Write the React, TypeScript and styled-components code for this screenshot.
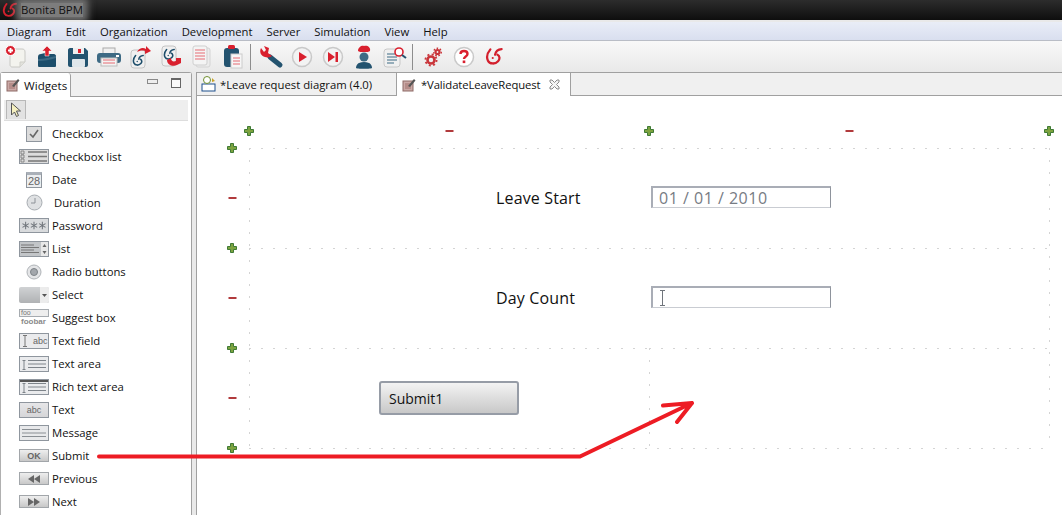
import { ReactNode } from "react";
import styled, { createGlobalStyle } from "styled-components";

const Global = createGlobalStyle`
  html, body { margin: 0; padding: 0; background: #fff; }
  body { font-family: "Open Sans", "Noto Sans", sans-serif; color: #111; overflow: hidden; }
`;

const Page = styled.div`
  width: 1062px;
  height: 515px;
  display: flex;
  flex-direction: column;
  overflow: hidden;
  position: relative;
`;

const TitleBar = styled.div`
  height: 20px;
  flex: none;
  display: flex;
  align-items: center;
  padding-left: 2px;
  background: linear-gradient(#2c2c2c, #0e0e0e);
  font-size: 11.4px;
  overflow: hidden;
`;

const TitleText = styled.span`
  color: #111;
  height: 14px;
  line-height: 14px;
  margin-left: 3px;
  background: rgba(135, 135, 135, 0.9);
  box-shadow: 0 0 7px 5px rgba(135, 135, 135, 0.8);
`;

const MenuBar = styled.div`
  height: 21px;
  flex: none;
  display: flex;
  align-items: center;
  gap: 14px;
  padding-left: 7px;
  border-top: 2px solid #e9e9e9;
  box-sizing: border-box;
  background: linear-gradient(#e9edf7, #d9dfef);
  border-bottom: 1px solid #b9bdc6;
  font-size: 11.3px;
`;

const ToolBar = styled.div`
  height: 31px;
  flex: none;
  display: flex;
  align-items: center;
  background: linear-gradient(#f8f8f8, #e9e9e9);
`;

const ToolButton = styled.div`
  width: 31px;
  height: 26px;
  display: flex;
  align-items: center;
  justify-content: center;
  flex: none;
`;

const ToolSep = styled.div`
  width: 1px;
  height: 26px;
  margin: 0 4px 0 2px;
  background: #8d8d8d;
  flex: none;
`;

const Workspace = styled.div`
  flex: 1;
  display: flex;
  gap: 4px;
  background: #e9e9e9;
  min-height: 0;
`;

const SidePanel = styled.div`
  width: 192px;
  flex: none;
  display: flex;
  flex-direction: column;
  box-sizing: border-box;
  border: 1px solid #a0a0a0;
  border-left-color: #b0b0b0;
  border-bottom: 0;
  border-radius: 3px 3px 0 0;
  background: #fff;
`;

const SideHead = styled.div`
  height: 23px;
  flex: none;
  display: flex;
  background: #f0f0f0;
  border-bottom: 1px solid #a0a0a0;
`;

const SideTab = styled.div`
  width: 70px;
  height: 24px;
  box-sizing: border-box;
  display: flex;
  align-items: center;
  gap: 4px;
  padding-left: 5px;
  font-size: 11.6px;
  background: #fff;
  border-right: 1px solid #a0a0a0;
  border-radius: 0 3px 0 0;
`;

const ViewControls = styled.div`
  margin-left: auto;
  display: flex;
  gap: 13px;
  padding: 5px 10px 0 0;
  align-items: flex-start;
`;

const MinBox = styled.div`
  width: 9px;
  height: 3px;
  margin-top: 1px;
  border: 1px solid #8a8a8a;
  background: #eee;
`;

const MaxBox = styled.div`
  width: 8px;
  height: 7px;
  border: 1px solid #666;
  border-top-width: 2px;
  background: #fafafa;
`;

const PaletteTools = styled.div`
  margin: 3px 3px 0 3px;
  height: 20px;
  flex: none;
  background: #eeeeee;
  border-bottom: 1px solid #ddd;
  display: flex;
`;

const ToolSelect = styled.div`
  width: 18px;
  height: 18px;
  margin-left: 2px;
  border: 1px solid #b8b8b8;
  border-bottom: 0;
  background: #e2e2e2;
  display: flex;
  align-items: center;
  justify-content: center;
`;

const WidgetList = styled.div`
  display: flex;
  flex-direction: column;
  padding-top: 1px;
`;

const WidgetRow = styled.div`
  height: 23px;
  flex: none;
  display: flex;
  align-items: center;
  font-size: 11.3px;
`;

const WidgetIcon = styled.div`
  width: 30px;
  margin-left: 18px;
  margin-right: 3px;
  height: 18px;
  display: flex;
  align-items: center;
  justify-content: center;
  flex: none;
`;

const WidgetName = styled.span<{ $shift?: number }>`
  margin-left: ${(p) => p.$shift ?? 0}px;
  white-space: nowrap;
`;

const Editor = styled.div`
  flex: 1;
  min-width: 0;
  display: flex;
  flex-direction: column;
  background: #fff;
  border-left: 1px solid #a0a0a0;
`;

const TabStrip = styled.div`
  height: 24px;
  flex: none;
  display: flex;
  background: #f0f0f0;
  border-top: 1px solid #a0a0a0;
  border-bottom: 1px solid #a0a0a0;
  box-sizing: border-box;
`;

const EditorTab = styled.div<{ $active?: boolean }>`
  width: ${(p) => (p.$active ? 174 : 200)}px;
  box-sizing: border-box;
  display: flex;
  align-items: center;
  gap: ${(p) => (p.$active ? 5 : 2)}px;
  padding-left: ${(p) => (p.$active ? 5 : 3)}px;
  font-size: 11.3px;
  letter-spacing: ${(p) => (p.$active ? -0.12 : 0)}px;
  background: ${(p) => (p.$active ? "#fff" : "#f0f0f0")};
  margin-bottom: ${(p) => (p.$active ? -1 : 0)}px;
  border-right: 1px solid #a0a0a0;
`;

const CloseMark = styled.span`
  margin-left: 4px;
  display: flex;
`;

const Canvas = styled.div`
  flex: 1;
  position: relative;
  background: #fff;
  overflow: hidden;
`;

const dotsH = `repeating-linear-gradient(90deg, #d4d4d4 0 2px, transparent 2px 12px)`;
const dotsV = `repeating-linear-gradient(180deg, #d4d4d4 0 2px, transparent 2px 12px)`;

const FormGrid = styled.div`
  display: grid;
  grid-template-columns: 400px 400px;
  grid-auto-rows: 100px;
  padding: 52px 0 0 52px;
  width: 800px;
`;

const Cell = styled.div<{ $merged?: boolean }>`
  display: flex;
  align-items: center;
  background-image: ${(p) => (p.$merged ? dotsH : `${dotsH}, ${dotsV}`)};
  background-size: ${(p) => (p.$merged ? "100% 1px" : "100% 1px, 1px 100%")};
  background-repeat: no-repeat;
`;

const FormLabel = styled.span`
  margin-left: 247px;
  font-size: 16px;
  letter-spacing: 0.15px;
  color: #111;
`;

const InputBox = styled.div`
  margin: 0 0 2px 2px;
  width: 180px;
  height: 22px;
  box-sizing: border-box;
  border: 1px solid #c9ccd2;
  border-top: 2px solid #a9adb6;
  border-left: 2px solid #a9adb6;
  border-right-color: #8e939c;
  display: flex;
  align-items: center;
  padding-left: 6px;
  font-size: 16px;
  color: #777c84;
  letter-spacing: 0.5px;
`;

const FormButton = styled.div`
  margin: 0 auto;
  width: 140px;
  height: 34px;
  box-sizing: border-box;
  border: 2px solid #969ca6;
  border-radius: 3px;
  background: linear-gradient(#f3f3f3, #c8c8c8);
  display: flex;
  align-items: center;
  padding-left: 8px;
  font-size: 14px;
`;

const GridEdge = styled.div`
  position: absolute;
  left: 52px;
  top: 352px;
  width: 800px;
  height: 1px;
  background-image: ${dotsH};
`;

const RightEdge = styled.div`
  position: absolute;
  left: 852px;
  top: 52px;
  width: 1px;
  height: 300px;
  background-image: ${dotsV};
`;

const Handle = styled.div<{ $x: number; $y: number }>`
  position: absolute;
  left: ${(p) => p.$x - 5}px;
  top: ${(p) => p.$y - 5}px;
  width: 11px;
  height: 11px;
  display: flex;
`;

const ArrowOverlay = styled.svg`
  position: absolute;
  left: 0;
  top: 0;
  pointer-events: none;
`;

const Frame = styled.span<{ $w?: number; $h?: number; $bg?: string }>`
  width: ${(p) => p.$w ?? 30}px;
  height: ${(p) => p.$h ?? 16}px;
  box-sizing: border-box;
  border: 1px solid #8f969e;
  background: ${(p) => p.$bg ?? "#dcdcdc"};
  display: flex;
  align-items: center;
  justify-content: center;
  overflow: hidden;
  flex: none;
  font-size: 9px;
  line-height: 10px;
  color: #666;
  font-family: "Liberation Sans", sans-serif;
`;

const DateFrame = styled(Frame)`
  font-size: 11px;
  line-height: 11px;
  align-items: flex-end;
  border-top: 3px solid #aab0b8;
`;

const FieldFrame = styled(Frame)`
  justify-content: flex-start;
  padding-left: 2px;
  gap: 5px;
`;

const SelectFrame = styled(Frame)`
  border: 0;
  border-radius: 2px;
  justify-content: flex-end;
`;

const OkFrame = styled(Frame)`
  font-weight: 700;
  border-color: #a2a6aa;
`;

const SuggestIcon = styled.span`
  width: 30px;
  display: flex;
  flex-direction: column;
  font-family: "Liberation Sans", sans-serif;
  font-size: 8px;
  line-height: 8px;
  color: #777;
`;

const SuggestField = styled.span`
  height: 8px;
  box-sizing: border-box;
  border: 1px solid #a6abb0;
  background: #eee;
  font-size: 7px;
  line-height: 6px;
  padding-left: 1px;
  margin-bottom: 1px;
  overflow: hidden;
`;

const SuggestValue = styled.span`
  padding-left: 2px;
  font-weight: 700;
  color: #8a8a8a;
`;

const Plus = () => (
  <svg width="10" height="10" viewBox="0 0 10 10">
    <path d="M3.500 .5h3v3h3v3h-3v3h-3v-3h-3v-3h3z" fill="#7da33f" stroke="#3f7a35" />
  </svg>
);

const Minus = () => (
  <svg width="11" height="11" viewBox="0 0 11 11">
    <rect x="1.500" y="4" width="8" height="2" fill="#b13a3c" />
  </svg>
);

const Logo = ({ size = 16, c = "#d3202d" }: { size?: number; c?: string }) => (
  <svg width={size} height={size} viewBox="0 0 16 16" fill="none" stroke={c} strokeWidth="1.900" strokeLinecap="round">
    <path d="M4.500 2C2 5 1 8.500 2.500 11.500c1.500 3 6 3.200 8.500.5 1.800-2 1.500-4.500-.5-5.500" />
    <path d="M14 1.800C11 2 9 4 8.500 6.500" />
    <circle cx="6.500" cy="9.300" r=".9" fill={c} stroke="none" />
  </svg>
);

const Page2 = ({ children }: { children?: ReactNode }) => (
  <svg width="24" height="26" viewBox="0 0 24 26">
    <path d="M6 5h12c2 0 3 1 3 3v10l-5 5H8c-1 0-2-1-2-2z" fill="#f3f3ee" stroke="#c8c8c4" />
    <path d="M21 18h-5v5" fill="#e2e2dc" stroke="#cfcfc9" />
    {children}
  </svg>
);

const toolIcons: ReactNode[] = [
  <Page2 key="new">
    <circle cx="6.500" cy="6.500" r="5" fill="#d9202e" stroke="#fff" />
    <path d="M4 6.500h5M6.500 4v5" stroke="#fff" strokeWidth="1.800" />
  </Page2>,
  <svg key="import" width="24" height="24" viewBox="0 0 24 24">
    <path d="M3 12c0-2 1-3 3-3l4-1 2 1h7c1 0 2 1 2 2v10c0 1-1 1-2 1H4c-1 0-1-1-1-2z" fill="#1d4e6b" />
    <path d="M3 14c6 0 12-2 18-3v2c-6 2-12 3-18 3z" fill="#3d6a84" />
    <path d="M10 11V6H7l5-5 5 5h-3v5z" fill="#d9202e" stroke="#fff" strokeWidth=".5" />
  </svg>,
  <svg key="save" width="24" height="24" viewBox="0 0 24 24">
    <path d="M4 3h15l3 3v14c0 1-1 2-2 2H4c-1 0-2-1-2-2V5c0-1 1-2 2-2z" fill="#23536f" />
    <rect x="7" y="3" width="11" height="6" fill="#eee" />
    <rect x="12" y="4" width="3" height="4" fill="#d9202e" />
    <rect x="6" y="14" width="13" height="8" rx="1" fill="#dfe6ea" />
  </svg>,
  <svg key="print" width="26" height="24" viewBox="0 0 26 24">
    <rect x="7" y="3" width="12" height="6" fill="#f0f0f0" stroke="#aaa" />
    <rect x="1" y="8" width="24" height="10" rx="3" fill="#3d6a84" />
    <rect x="5" y="13" width="16" height="8" fill="#f3f3f3" stroke="#bbb" />
    <path d="M7 15h12M7 18h12" stroke="#e66a72" />
    <rect x="20" y="10" width="3" height="2" fill="#fff" />
  </svg>,
  <svg key="export" width="24" height="26" viewBox="0 0 24 26">
    <rect x="3" y="6" width="14" height="18" rx="3" fill="#f0f0f0" stroke="#c4c4c4" />
    <g transform="translate(4 10) scale(.8)"><Logo c="#1d4e6b" /></g>
    <path d="M9 8c2-4 6-5 9-3V2l5 5-6 3V7c-3-1-6 0-8 1z" fill="#d9202e" />
  </svg>,
  <svg key="importlogo" width="24" height="26" viewBox="0 0 24 26">
    <rect x="3" y="2" width="14" height="20" rx="3" fill="#f0f0f0" stroke="#c4c4c4" />
    <g transform="translate(4 4) scale(.8)"><Logo c="#1d4e6b" /></g>
    <path d="M8 16c0 5 6 7 10 5l4-2v-5h-5v3c-3 1-5 0-5-3z" fill="#d9202e" />
  </svg>,
  <svg key="docs" width="24" height="26" viewBox="0 0 24 26">
    <rect x="6" y="4" width="14" height="19" rx="2" fill="#ececec" stroke="#d4d4d4" />
    <rect x="3" y="2" width="14" height="19" rx="2" fill="#f4f4f4" stroke="#cfcfcf" />
    <path d="M5 6h10M5 9h10M5 12h10M5 15h10" stroke="#e66a72" />
  </svg>,
  <svg key="clip" width="24" height="26" viewBox="0 0 24 26">
    <rect x="3" y="4" width="15" height="19" rx="3" fill="#23536f" />
    <rect x="7" y="1" width="7" height="4" rx="1.500" fill="#d9202e" />
    <rect x="10" y="10" width="11" height="14" fill="#f6f6f6" stroke="#ccc" />
    <path d="M12 14h7M12 17h7M12 20h7" stroke="#e66a72" />
  </svg>,
];

const runIcons: ReactNode[] = [
  <svg key="wrench" width="26" height="24" viewBox="0 0 26 24">
    <path d="M12 12l10 8" stroke="#23536f" strokeWidth="5" strokeLinecap="round" />
    <path d="M3 3c-2 4 0 8 4 9 3 1 6 0 7-1L10 8 11 3 6 1l2 4-2 2z" fill="#d9202e" />
  </svg>,
  <svg key="run" width="22" height="22" viewBox="0 0 22 22">
    <circle cx="11" cy="11" r="9.500" fill="#f3f3f3" stroke="#c9c9c9" strokeWidth="1.500" />
    <path d="M8 6l8 5-8 5z" fill="#d9202e" />
  </svg>,
  <svg key="step" width="22" height="22" viewBox="0 0 22 22">
    <circle cx="11" cy="11" r="9.500" fill="#f3f3f3" stroke="#c9c9c9" strokeWidth="1.500" />
    <path d="M6 6l7 5-7 5z" fill="#d9202e" />
    <rect x="13.500" y="6" width="2.500" height="10" fill="#d9202e" />
  </svg>,
  <svg key="user" width="22" height="26" viewBox="0 0 22 26">
    <path d="M3 24c0-2 1-6 8-6s8 4 8 6c0 1-16 1-16 0z" fill="#23536f" />
    <circle cx="11" cy="13" r="4.500" fill="#3d6a84" />
    <path d="M5 7c0-4 4-6 6-5 3-1 7 1 6 5-1 1-3 1-6 1S6 8 5 7z" fill="#d9202e" />
  </svg>,
  <svg key="search" width="24" height="24" viewBox="0 0 24 24">
    <rect x="1" y="4" width="16" height="18" rx="3" fill="#f0f0f0" stroke="#c8c8c8" />
    <path d="M4 9h8M4 12h10M4 15h10M4 18h7" stroke="#3d6a84" strokeWidth="1.200" />
    <circle cx="16" cy="7" r="4" fill="#fff" stroke="#d9202e" strokeWidth="1.600" />
    <path d="M19 10l4 3" stroke="#23536f" strokeWidth="2" />
  </svg>,
];

const helpIcons: ReactNode[] = [
  <svg key="gears" width="18" height="20" viewBox="0 0 18 20">
    <circle cx="7" cy="13" r="3.500" fill="none" stroke="#c9353a" strokeWidth="2.600" />
    <circle cx="7" cy="13" r="5.600" fill="none" stroke="#c9353a" strokeWidth="1.800" strokeDasharray="2 2.400" />
    <circle cx="13.500" cy="5" r="2" fill="none" stroke="#c9353a" strokeWidth="2.200" />
    <circle cx="13.500" cy="5" r="3.800" fill="none" stroke="#c9353a" strokeWidth="1.400" strokeDasharray="1.600 1.700" />
  </svg>,
  <svg key="help" width="22" height="22" viewBox="0 0 22 22">
    <circle cx="11" cy="11" r="9.500" fill="#fff" stroke="#c9c9c9" strokeWidth="1.500" />
    <path d="M7.500 8c0-4 7-4 7 0 0 2.500-3.500 2.500-3.500 5" fill="none" stroke="#d9202e" strokeWidth="2.400" />
    <rect x="9.700" y="14.500" width="2.600" height="2.600" fill="#d9202e" />
  </svg>,
  <Logo key="logo" size={19} />,
];

const Edit = ({ size = 14 }: { size?: number }) => (
  <svg width={size} height={size} viewBox="0 0 14 14">
    <rect x="1" y="3" width="10" height="10" fill="#caa9a6" stroke="#8e6a66" />
    <path d="M3 6h6M3 8h6M3 10h6" stroke="#a0706c" />
    <path d="M6 8l6-7 1.500 1.500L8 9z" fill="#555" />
  </svg>
);

const Lines = ({ bar }: { bar?: boolean }) => (
  <svg width="28" height="14" viewBox="0 0 28 14" stroke="#7e848a">
    {bar && <rect x="-1" y="0" width="30" height="2" fill="#555" stroke="none" />}
    <path d="M8 3.500h18M8 7h18M8 10.500h18" />
    <path d="M4 4v8M2.500 3.500h3M2.500 12.500h3" />
  </svg>
);

const Star = ({ x }: { x: number }) => (
  <path d={`M${x} 3v8M${x - 3.400} 5l6.800 4M${x - 3.400} 9l6.800-4`} />
);

const widgets: { name: string; icon: ReactNode; shift?: number }[] = [
  {
    name: "Checkbox",
    icon: (
      <Frame $w={16} $h={16}>
        <svg width="10" height="10" viewBox="0 0 10 10"><path d="M1 5l3 3 5-7" fill="none" stroke="#666" strokeWidth="1.600" /></svg>
      </Frame>
    ),
  },
  {
    name: "Checkbox list",
    icon: (
      <Frame $h={15}>
        <svg width="28" height="13" viewBox="0 0 28 13" stroke="#777">
          <path d="M8 2h19M8 6.500h19M8 11h19" strokeWidth="1.300" />
          <path d="M1 1h3v3H1zM1 5h3v3H1zM1 9h3v3H1z" fill="none" strokeWidth=".8" />
        </svg>
      </Frame>
    ),
  },
  { name: "Date", icon: <DateFrame $w={16} $h={16} $bg="#eceef0">28</DateFrame> },
  {
    name: "Duration",
    shift: 2,
    icon: (
      <svg width="17" height="17" viewBox="0 0 17 17">
        <circle cx="8.500" cy="8.500" r="7.500" fill="#dfe1e3" stroke="#a8adb2" />
        <path d="M9 4v5H5" fill="none" stroke="#8d9298" />
      </svg>
    ),
  },
  {
    name: "Password",
    icon: (
      <Frame $h={15} $bg="#d9dbdd">
        <svg width="28" height="13" viewBox="0 0 28 14" stroke="#6f747a" strokeWidth="1.100">
          <Star x={5} />
          <Star x={14} />
          <Star x={23} />
        </svg>
      </Frame>
    ),
  },
  {
    name: "List",
    icon: (
      <Frame $h={16} $bg="#c2c5c8">
        <svg width="28" height="14" viewBox="0 0 28 14" stroke="#777">
          <path d="M1 3h13M1 5.500h18M1 8h13M1 10.500h18" strokeWidth="1.200" />
          <rect x="21" y="0" width="7" height="14" fill="#e8e8e8" stroke="none" />
          <path d="M24.500 2l2 3h-4zM24.500 12l2-3h-4z" fill="#666" stroke="none" />
        </svg>
      </Frame>
    ),
  },
  {
    name: "Radio buttons",
    icon: (
      <svg width="16" height="16" viewBox="0 0 16 16">
        <circle cx="8" cy="8" r="7" fill="#e4e5e7" stroke="#b0b4b8" />
        <circle cx="8" cy="8" r="3.500" fill="#a3a7ac" stroke="#7e8388" />
      </svg>
    ),
  },
  {
    name: "Select",
    icon: (
      <SelectFrame $h={16} $bg="linear-gradient(#d0d2d4, #b0b2b4)">
        <svg width="9" height="16" viewBox="0 0 9 16">
          <rect width="9" height="16" fill="#ececec" />
          <path d="M2 7h5l-2.500 3z" fill="#555" />
        </svg>
      </SelectFrame>
    ),
  },
  {
    name: "Suggest box",
    icon: (
      <SuggestIcon>
        <SuggestField>foo</SuggestField>
        <SuggestValue>foobar</SuggestValue>
      </SuggestIcon>
    ),
  },
  {
    name: "Text field",
    icon: (
      <FieldFrame $h={16} $bg="#eaebed">
        <svg width="6" height="12" viewBox="0 0 6 12" stroke="#777"><path d="M3 1v10M1 .5h4M1 11.500h4" /></svg>
        abc
      </FieldFrame>
    ),
  },
  { name: "Text area", icon: <Frame $h={16} $bg="#eaebed"><Lines /></Frame> },
  { name: "Rich text area", icon: <Frame $h={16} $bg="#eaebed"><Lines bar /></Frame> },
  { name: "Text", icon: <Frame $h={16} $bg="linear-gradient(#e6e6e8, #d6d6d8)">abc</Frame> },
  {
    name: "Message",
    icon: (
      <Frame $h={16} $bg="#e8e9eb">
        <svg width="26" height="10" viewBox="0 0 26 10" stroke="#8a8f94"><path d="M1 1.500h18M1 5h24M1 8.500h24" /></svg>
      </Frame>
    ),
  },
  { name: "Submit", icon: <OkFrame $h={13} $bg="linear-gradient(#eeeeee, #c8c8c8)">OK</OkFrame> },
  {
    name: "Previous",
    icon: (
      <OkFrame $h={13} $bg="linear-gradient(#eeeeee, #c8c8c8)">
        <svg width="14" height="8" viewBox="0 0 14 8" fill="#666"><path d="M7 0v8L1 4zM13 0v8L7 4z" /></svg>
      </OkFrame>
    ),
  },
  {
    name: "Next",
    icon: (
      <OkFrame $h={13} $bg="linear-gradient(#eeeeee, #c8c8c8)">
        <svg width="14" height="8" viewBox="0 0 14 8" fill="#666"><path d="M1 0v8l6-4zM7 0v8l6-4z" /></svg>
      </OkFrame>
    ),
  },
];

const menus = ["Diagram", "Edit", "Organization", "Development", "Server", "Simulation", "View", "Help"];

// handle positions are relative to the canvas, it starts at x=197 y=96
const handles = [
  ...[249, 649, 1049].map((x) => ({ x: x - 197, y: 35, plus: true })),
  ...[449, 849].map((x) => ({ x: x - 197, y: 35, plus: false })),
  ...[148, 248, 348, 448].map((y) => ({ x: 35, y: y - 96, plus: true })),
  ...[198, 298, 398].map((y) => ({ x: 35, y: y - 96, plus: false })),
];

export default function App() {
  return (
    <Page>
      <Global />
      <TitleBar>
        <Logo />
        <TitleText>Bonita BPM</TitleText>
      </TitleBar>
      <MenuBar>
        {menus.map((m) => (
          <span key={m}>{m}</span>
        ))}
      </MenuBar>
      <ToolBar>
        {toolIcons.map((ic, i) => (
          <ToolButton key={i}>{ic}</ToolButton>
        ))}
        <ToolSep />
        {runIcons.map((ic, i) => (
          <ToolButton key={i}>{ic}</ToolButton>
        ))}
        <ToolSep />
        {helpIcons.map((ic, i) => (
          <ToolButton key={i}>{ic}</ToolButton>
        ))}
      </ToolBar>
      <Workspace>
        <SidePanel>
          <SideHead>
            <SideTab>
              <Edit />
              Widgets
            </SideTab>
            <ViewControls>
              <MinBox />
              <MaxBox />
            </ViewControls>
          </SideHead>
          <PaletteTools>
            <ToolSelect>
              <svg width="12" height="16" viewBox="0 0 12 16">
                <path d="M1.500 1v12l3-3 2 4.500 2-1-2-4.500h4z" fill="#f5f0c0" stroke="#555" />
              </svg>
            </ToolSelect>
          </PaletteTools>
          <WidgetList>
            {widgets.map((w) => (
              <WidgetRow key={w.name}>
                <WidgetIcon>{w.icon}</WidgetIcon>
                <WidgetName $shift={w.shift}>{w.name}</WidgetName>
              </WidgetRow>
            ))}
          </WidgetList>
        </SidePanel>
        <Editor>
          <TabStrip>
            <EditorTab>
              <svg width="18" height="18" viewBox="0 0 18 18">
                <rect x="2" y="9" width="13" height="7" fill="#fff" stroke="#1d4e8b" />
                <circle cx="7" cy="5" r="3.500" fill="#fff" stroke="#6f8f2f" />
                <path d="M12 3l3 3-3 1z" fill="#c9a227" />
              </svg>
              *Leave request diagram (4.0)
            </EditorTab>
            <EditorTab $active>
              <Edit />
              *ValidateLeaveRequest
              <CloseMark>
                <svg width="11" height="11" viewBox="0 0 11 11">
                  <path d="M1 1h2l2.500 2.500L8 1h2v2L7.500 5.500 10 8v2H8L5.500 7.500 3 10H1V8l2.500-2.500L1 3z" fill="#f4f4f4" stroke="#8a8a8a" />
                </svg>
              </CloseMark>
            </EditorTab>
          </TabStrip>
          <Canvas>
            <FormGrid>
              <Cell><FormLabel>Leave Start</FormLabel></Cell>
              <Cell $merged><InputBox>01 / 01 / 2010</InputBox></Cell>
              <Cell><FormLabel>Day Count</FormLabel></Cell>
              <Cell $merged>
                <InputBox>
                  <svg width="7" height="16" viewBox="0 0 7 16" stroke="#70757c">
                    <path d="M3.500 1v14M1 .5h5M1 15.500h5" />
                  </svg>
                </InputBox>
              </Cell>
              <Cell><FormButton>Submit1</FormButton></Cell>
              <Cell />
            </FormGrid>
            <GridEdge />
            <RightEdge />
            {handles.map((h) => (
              <Handle key={`${h.x}-${h.y}`} $x={h.x} $y={h.y}>
                {h.plus ? <Plus /> : <Minus />}
              </Handle>
            ))}
          </Canvas>
        </Editor>
      </Workspace>
      <ArrowOverlay width="1062" height="515" viewBox="0 0 1062 515">
        <path d="M99 456.500H580L692 403M663 405.500L692 403L677 422" fill="none" stroke="#ed1c24" strokeWidth="4" strokeLinecap="round" strokeLinejoin="round" />
      </ArrowOverlay>
    </Page>
  );
}
